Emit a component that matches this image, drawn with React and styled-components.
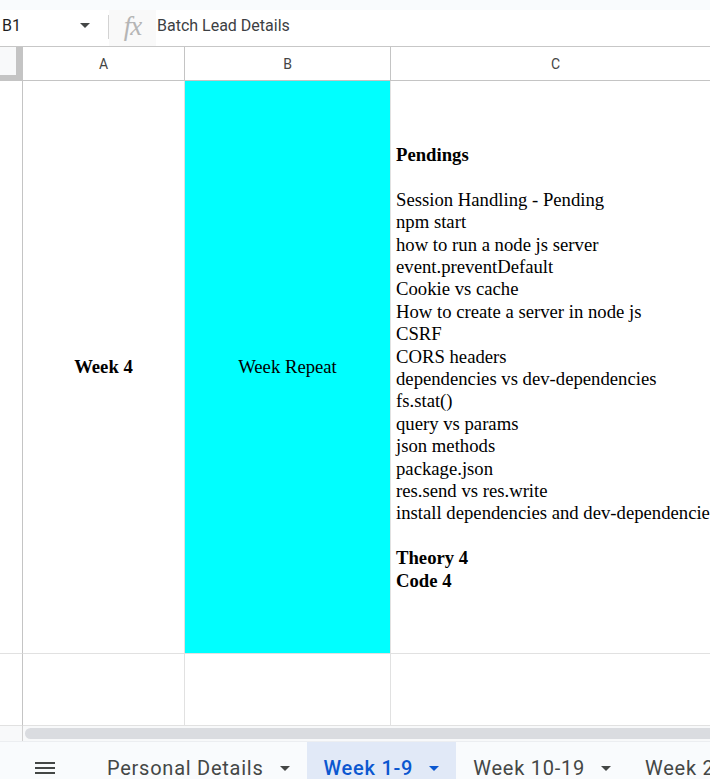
import React from 'react'
import styled, { createGlobalStyle } from 'styled-components'

const GlobalStyle = createGlobalStyle`
  html, body {
    margin: 0;
    padding: 0;
    background: #fff;
    overflow: hidden;
  }
`

const Page = styled.div`
  width: 710px;
  height: 779px;
  display: flex;
  flex-direction: column;
  overflow: hidden;
  font-family: Roboto, "Liberation Sans", sans-serif;
`

const TopStrip = styled.div`
  height: 10px;
  flex: none;
  background: #f9fbfd;
`

const FormulaBar = styled.div`
  height: 36px;
  flex: none;
  display: flex;
  align-items: stretch;
  border-bottom: 1px solid #c7c7c7;
  background: #fff;
`

const NameBox = styled.div`
  width: 108px;
  display: flex;
  align-items: center;
  justify-content: space-between;
  padding: 0 18px 6px 2px;
  box-sizing: border-box;
  font-size: 16px;
  color: #1f1f1f;
`

const Caret = styled.span`
  width: 0;
  height: 0;
  border-left: ${p => p.$size || 5}px solid transparent;
  border-right: ${p => p.$size || 5}px solid transparent;
  border-top: ${p => p.$size || 5}px solid ${p => p.$color || '#444746'};
  flex: none;
`

const Divider = styled.div`
  width: 1px;
  margin: 5px 0 7px;
  background: #d3d3d3;
`

const FxBox = styled.div`
  width: 47px;
  display: flex;
  align-items: center;
  justify-content: center;
  padding-bottom: 3px;
  box-sizing: border-box;
  background: #f9f9f9;
  font-family: "Liberation Serif", serif;
  font-style: italic;
  font-size: 27px;
  color: #b5b5b5;
  letter-spacing: -1px;
`

const FormulaText = styled.div`
  display: flex;
  align-items: center;
  padding: 0 0 6px 1px;
  font-size: 16px;
  color: #3c4043;
`

const Grid = styled.div`
  flex: none;
  display: grid;
  grid-template-columns: 23px 162px 206px 330px;
  grid-template-rows: 34px 573px 72px;
`

const Corner = styled.div`
  background: #f8f9fa;
  border-right: 7px solid #c4c4c4;
  border-bottom: 6px solid #c4c4c4;
`

const ColHeader = styled.div`
  display: flex;
  align-items: center;
  justify-content: center;
  border-right: 1px solid #c4c4c4;
  border-bottom: 1px solid #c4c4c4;
  font-size: 14px;
  color: #444;
`

const RowHeader = styled.div`
  border-right: 1px solid #c4c4c4;
  border-bottom: 1px solid #e1e1e1;
  background: #fff;
`

const Cell = styled.div`
  display: flex;
  align-items: center;
  justify-content: ${p => (p.$align === 'left' ? 'flex-start' : 'center')};
  padding: 0 5px;
  border-right: 1px solid #e1e1e1;
  border-bottom: 1px solid #e1e1e1;
  background: ${p => p.$bg || '#fff'};
  font-family: "Liberation Serif", "Times New Roman", serif;
  font-size: 18.7px;
  line-height: 22.4px;
  font-weight: ${p => (p.$bold ? 700 : 400)};
  color: #000;
  white-space: pre;
  overflow: hidden;
`

const Lines = styled.div`
  display: flex;
  flex-direction: column;
  padding-top: 2px;
`

const Line = styled.div`
  height: 22.4px;
  font-weight: ${p => (p.$bold ? 700 : 400)};
`

const ScrollRow = styled.div`
  height: 15px;
  flex: none;
  display: flex;
  background: #f8f9fa;
`

const ScrollGutter = styled.div`
  width: 22px;
  border-right: 1px solid #d0d0d0;
`

const ScrollTrack = styled.div`
  flex: 1;
  padding: 2px 0 2px 2px;
  display: flex;
`

const Thumb = styled.div`
  flex: 1;
  border-radius: 6px 0 0 6px;
  background: #dadce0;
`

const TabBar = styled.div`
  flex: 1;
  display: flex;
  align-items: stretch;
  background: #f9fbfd;
  border-top: 1px solid #eceef1;
  white-space: nowrap;
`

const MenuButton = styled.div`
  width: 90px;
  flex: none;
  display: flex;
  justify-content: center;
  padding-top: 19px;
  box-sizing: border-box;
`

const Tab = styled.div`
  display: flex;
  align-items: center;
  gap: 16px;
  height: 22px;
  padding: 15px 17px 0;
  flex: none;
  background: ${p => (p.$active ? '#e1e9f7' : 'transparent')};
  color: ${p => (p.$active ? '#0b57d0' : '#444746')};
  font-size: 20px;
  font-weight: ${p => (p.$active ? 500 : 400)};
  letter-spacing: 0.75px;
`

const pendings = [
  'Session Handling - Pending',
  'npm start',
  'how to run a node js server',
  'event.preventDefault',
  'Cookie vs cache',
  'How to create a server in node js',
  'CSRF',
  'CORS headers',
  'dependencies vs dev-dependencies',
  'fs.stat()',
  'query vs params',
  'json methods',
  'package.json',
  'res.send vs res.write',
  'install dependencies and dev-dependencies'
]

const tabs = [
  { name: 'Personal Details' },
  { name: 'Week 1-9', active: true },
  { name: 'Week 10-19' },
  { name: 'Week 20-29' }
]

const MenuIcon = () => (
  <svg width="20" height="14" viewBox="0 0 20 14">
    <rect x="0" y="1" width="20" height="2" fill="#444746" />
    <rect x="0" y="6" width="20" height="2" fill="#444746" />
    <rect x="0" y="11" width="20" height="2" fill="#444746" />
  </svg>
)

const App = () => {
  return (
    <Page>
      <GlobalStyle />
      <TopStrip />
      <FormulaBar>
        <NameBox>
          B1
          <Caret />
        </NameBox>
        <Divider />
        <FxBox>fx</FxBox>
        <FormulaText>Batch Lead Details</FormulaText>
      </FormulaBar>
      <Grid>
        <Corner />
        <ColHeader>A</ColHeader>
        <ColHeader>B</ColHeader>
        <ColHeader>C</ColHeader>

        <RowHeader />
        <Cell $bold>Week 4</Cell>
        <Cell $bg="#00ffff">Week Repeat</Cell>
        <Cell $align="left">
          <Lines>
            <Line $bold>Pendings</Line>
            <Line />
            {pendings.map(item => (
              <Line key={item}>{item}</Line>
            ))}
            <Line />
            <Line $bold>Theory 4</Line>
            <Line $bold>Code 4</Line>
          </Lines>
        </Cell>

        <RowHeader />
        <Cell />
        <Cell />
        <Cell />
      </Grid>
      <ScrollRow>
        <ScrollGutter />
        <ScrollTrack>
          <Thumb />
        </ScrollTrack>
      </ScrollRow>
      <TabBar>
        <MenuButton>
          <MenuIcon />
        </MenuButton>
        {tabs.map(tab => (
          <Tab key={tab.name} $active={tab.active}>
            {tab.name}
            <Caret $color={tab.active ? '#0b57d0' : '#444746'} />
          </Tab>
        ))}
      </TabBar>
    </Page>
  )
}

export default App
